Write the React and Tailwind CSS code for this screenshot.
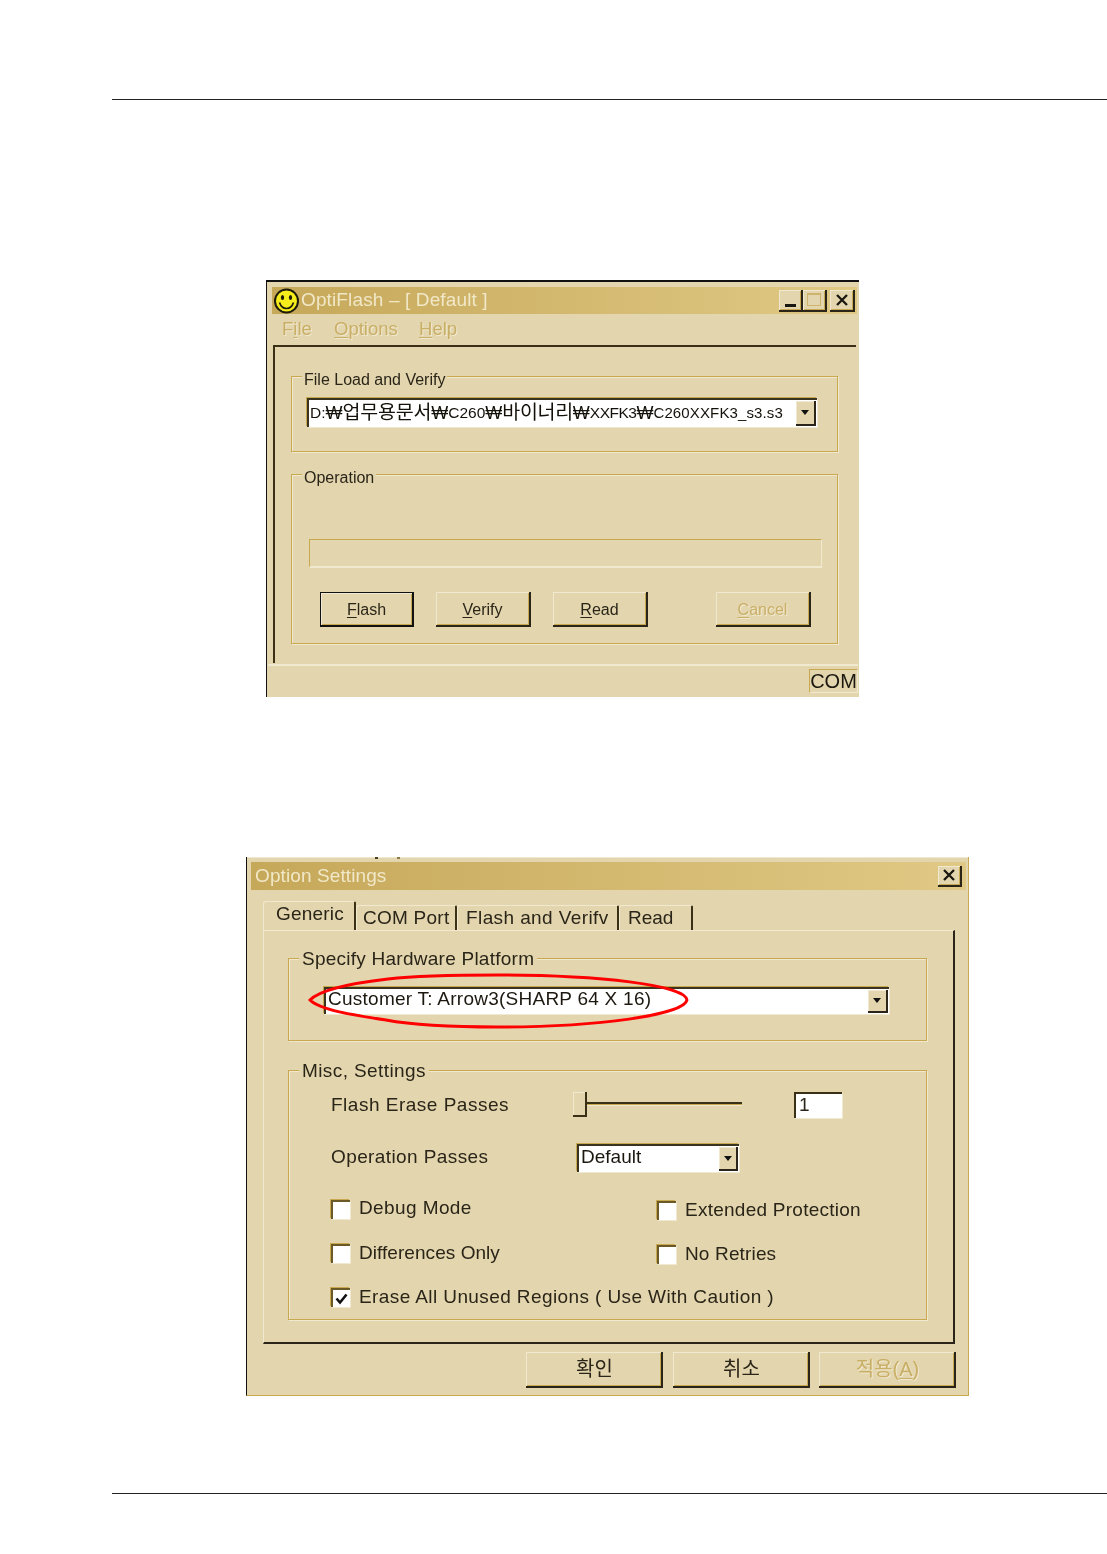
const ui = "font-['Liberation_Sans','Noto_Sans_CJK_KR',sans-serif] text-[#2a2518] blur-[0.35px]";

function Mn({ children }) {
  return <span className="underline underline-offset-2 decoration-1">{children}</span>;
}

function Group({ label, className, labelClass, children }) {
  return (
    <div className={`relative border border-[#c9a94f] shadow-[inset_1px_1px_0_#f1e9cf,1px_1px_0_#f1e9cf] ${className}`}>
      <div className={`absolute bg-[#e3d6ae] whitespace-nowrap ${labelClass}`}>{label}</div>
      {children}
    </div>
  );
}

function Arrow() {
  return (
    <svg width="8" height="5" viewBox="0 0 8 5">
      <path d="M0 0h8L4 5z" fill="#111" />
    </svg>
  );
}

function Combo({ className, btn = 'w-[20px]', children }) {
  return (
    <div className={`flex border-t-2 border-l-2 border-[#3a3320] shadow-[-1px_-1px_0_#c9a94f,1px_1px_0_#f1e9cf] bg-white ${className}`}>
      <div className="flex-1 min-w-0 overflow-hidden whitespace-nowrap flex items-center">{children}</div>
      <div className={`${btn} my-[1px] mr-[1px] flex items-center justify-center bg-[#e3d6ae] border-r-2 border-b-2 border-[#2a2518] shadow-[inset_1px_1px_0_#f1e9cf]`}>
        <Arrow />
      </div>
    </div>
  );
}

function WinBtn({ className, children, dark }) {
  return (
    <div className={`flex items-center justify-center bg-[#e3d6ae] border-r-2 border-b-2 ${dark ? 'border-[#111]' : 'border-[#2a2518]'} shadow-[inset_1px_1px_0_#f1e9cf,inset_-1px_-1px_0_#c9a94f] ${className}`}>
      {children}
    </div>
  );
}

function CloseIcon() {
  return (
    <svg width="14" height="12" viewBox="0 0 14 12">
      <path d="M2 1 12 11M12 1 2 11" stroke="#1a1610" strokeWidth="2.3" fill="none" />
    </svg>
  );
}

function Smiley() {
  return (
    <svg width="27" height="26" viewBox="0 0 27 26" className="shrink-0">
      <circle cx="13.5" cy="13" r="11.5" fill="#f5ec1c" stroke="#1c1a08" strokeWidth="2" />
      <ellipse cx="9.5" cy="9.5" rx="1.6" ry="2.6" fill="#1c1a08" />
      <ellipse cx="17.5" cy="9.5" rx="1.6" ry="2.6" fill="#1c1a08" />
      <path d="M6.5 14.5c1.5 4.5 4.2 6 7 6s5.5-1.5 7-6" stroke="#1c1a08" strokeWidth="1.7" fill="none" />
    </svg>
  );
}

function Check({ checked, className = '' }) {
  return (
    <div className={`w-[19px] h-[19px] shrink-0 bg-white border-t-2 border-l-2 border-[#6b5a28] shadow-[-1px_-1px_0_#c9a94f,1px_1px_0_#f1e9cf] flex items-center justify-center ${className}`}>
      {checked && (
        <svg width="13" height="12" viewBox="0 0 13 12">
          <path d="M1.5 5.5 5 9.5 11.5 1.5" stroke="#111" strokeWidth="2.6" fill="none" />
        </svg>
      )}
    </div>
  );
}

function CheckRow({ label, className, textClass = 'pb-[2px]' }) {
  return (
    <div className={`flex items-center ${className}`}>
      <Check />
      <span className={`ml-[9px] ${textClass}`}>{label}</span>
    </div>
  );
}

function Won() {
  return <span className="text-[18px]">₩</span>;
}

function OptiFlash() {
  return (
    <div className={`ml-[266px] mt-[180px] w-[593px] h-[417px] shrink-0 flex flex-col border-l border-t-2 border-[#111] bg-[#e3d6ae] ${ui}`}>
      <div className="mt-[5px] ml-[5px] mr-[2px] h-[27px] flex items-center bg-gradient-to-r from-[#c6a859] to-[#e0c985]">
        <div className="ml-[1px] mr-[1px]"><Smiley /></div>
        <span className="pb-[2px] text-[19px] tracking-[0.13px] text-[#f1e8c8] leading-none whitespace-nowrap">OptiFlash – [ Default ]</span>
        <div className="ml-auto flex items-center mr-[2px]">
          <WinBtn className="w-[24px] h-[22px] items-end pb-[3px]">
            <div className="w-[11px] h-[3px] bg-[#1a1610]" />
          </WinBtn>
          <WinBtn className="w-[24px] h-[22px]">
            <div className="w-[14px] h-[13px] border border-t-2 border-[#cdb36c]" />
          </WinBtn>
          <WinBtn className="ml-[3px] w-[25px] h-[22px]"><CloseIcon /></WinBtn>
        </div>
      </div>
      <div className="h-[31px] pb-[1px] flex items-center pl-[15px] text-[18.5px] leading-none text-[#c9ae66] [text-shadow:1px_1px_0_#f1e9cf] shrink-0">
        <span className="w-[52px]">F<Mn>i</Mn>le</span>
        <span className="w-[85px]"><Mn>O</Mn>ptions</span>
        <span><Mn>H</Mn>elp</span>
      </div>
      <div className="ml-[6px] mr-[3px] h-[318px] shrink-0 border-t-2 border-l-2 border-[#3a3015] pl-[16px] text-[16px] leading-none">
        <Group label="File Load and Verify" className="mt-[29px] w-[547px] h-[76px]" labelClass="-top-[5px] left-[10px] px-[2px]">
          <Combo className="ml-[15px] mt-[21px] w-[510px] h-[29px]">
            <span className="pl-[1px] pb-[2px] text-[#14110a] text-[15.5px] flex items-center">
              D:<Won /><span className="text-[19.5px] tracking-[-0.2px]">업무용문서</span><Won />C260<Won /><span className="text-[19.5px] tracking-[-0.3px]">바이너리</span><Won /><span className="tracking-[-0.5px]">XXFK3</span><Won /><span className="text-[15px] tracking-[0.13px]">C260XXFK3_s3.s3</span>
            </span>
          </Combo>
        </Group>
        <Group label="Operation" className="mt-[22px] w-[547px] h-[170px]" labelClass="-top-[5px] left-[10px] px-[2px]">
          <div className="ml-[17px] mt-[64px] w-[513px] h-[29px] border border-[#c9a94f] border-r-[#f1e9cf] border-b-[#f1e9cf] border-b-2" />
          <div className="flex mt-[24px] ml-[28px] text-[16px] pb-px">
            <WinBtn dark className="w-[94px] h-[35px] border-t border-l border-t-[#111] border-l-[#111] shadow-[inset_-1px_-1px_0_#c9a94f]"><span className="pt-[1px]"><Mn>F</Mn>lash</span></WinBtn>
            <WinBtn className="ml-[22px] w-[95px] h-[35px]"><span className="pt-[2px]"><Mn>V</Mn>erify</span></WinBtn>
            <WinBtn className="ml-[22px] w-[95px] h-[35px]"><span className="pt-[2px]"><Mn>R</Mn>ead</span></WinBtn>
            <WinBtn className="ml-[68px] w-[95px] h-[35px] text-[#c9ae66] [text-shadow:1px_1px_0_#f1e9cf]"><span className="pt-[2px]"><Mn>C</Mn>ancel</span></WinBtn>
          </div>
        </Group>
      </div>
      <div className="ml-[1px] mr-[1px] mt-[1px] flex-1 border-t-2 border-[#f1e9cf] flex justify-end items-start pt-[3px]">
        <div className="w-[49px] h-[24px] border border-[#c9a94f] border-r-[#f1e9cf] border-b-[#f1e9cf] text-[20px] leading-[22px] text-center text-[#1c1810] overflow-hidden">COM</div>
      </div>
    </div>
  );
}

function Tab({ className, children }) {
  return (
    <div className={`flex items-center bg-[#e3d6ae] border-t border-l border-t-[#f1e9cf] border-l-[#f1e9cf] border-r-2 border-r-[#3a3015] rounded-tl-[3px] rounded-tr-[2px] whitespace-nowrap ${className}`}>
      {children}
    </div>
  );
}

function OptionSettings() {
  return (
    <div className={`relative ml-[246px] mt-[160px] w-[723px] h-[539px] shrink-0 flex flex-col border-l border-[#111] border-r border-r-[#c9a94f] border-b border-b-[#c9a94f] bg-[#e3d6ae] shadow-[inset_0_1px_0_#f1e9cf] text-[19px] tracking-[0.4px] leading-none ${ui}`}>
      <div className="absolute left-[128px] top-0 w-[3px] h-[2px] bg-[#4a3f20]" />
      <div className="absolute left-[150px] top-0 w-[3px] h-[2px] bg-[#8a7a45]" />
      <div className="mt-[5px] ml-[4px] mr-[2px] h-[28px] shrink-0 flex items-center bg-gradient-to-r from-[#c6a859] to-[#e0c985]">
        <span className="ml-[4px] pb-[2px] tracking-[0.1px] text-[#f1e8c8]">Option Settings</span>
        <WinBtn className="ml-auto mr-[4px] w-[24px] h-[21px]"><CloseIcon /></WinBtn>
      </div>
      <div className="ml-[16px] mt-[11px] h-[29px] flex items-end shrink-0">
        <Tab className="w-[93px] h-[29px] pl-[12px] pb-[6px] tracking-[0.2px]">Generic</Tab>
        <Tab className="w-[101px] h-[25px] pl-[6px] pb-[2px] tracking-[0.25px]">COM Port</Tab>
        <Tab className="w-[162px] h-[25px] pl-[8px] pb-[2px]">Flash and Verifv</Tab>
        <Tab className="w-[74px] h-[25px] pl-[8px] pb-[2px] tracking-[0px]">Read</Tab>
      </div>
      <div className="relative ml-[16px] w-[692px] h-[414px] shrink-0 border-t border-l border-[#f1e9cf] border-r-2 border-r-[#2a2518] border-b-2 border-b-[#2a2518]">
        <Group label="Specify Hardware Platform" className="ml-[24px] mt-[27px] w-[639px] h-[83px] tracking-[0.25px]" labelClass="-top-[10px] left-[10px] px-[3px]">
          <Combo className="ml-[35px] mt-[28px] w-[565px] h-[27px]">
            <span className="pl-[2px] pb-[7px] text-[#1c1810] tracking-[0.25px]">Customer T: Arrow3(SHARP 64 X 16)</span>
          </Combo>
        </Group>
        <svg className="absolute left-[44px] top-[42px]" width="382" height="57" viewBox="0 0 382 57">
          <path d="M2 27C12 17 45 10 80 6 115 2 160 2 190 2 290 2 378 12 379 27 376 42 290 54 190 54 150 54 110 53 78 47 45 42 12 37 2 27Z" fill="none" stroke="#f00" strokeWidth="3" />
        </svg>
        <Group label="Misc, Settings" className="ml-[24px] mt-[29px] w-[639px] h-[250px]" labelClass="-top-[10px] left-[10px] px-[3px]">
          <div className="pl-[42px] pt-[21px] flex flex-col">
            <div className="flex items-center h-[26px]">
              <span className="w-[242px] pb-[2px] tracking-[0.5px]">Flash Erase Passes</span>
              <div className="relative w-[169px] h-[26px] flex items-center">
                <div className="w-full h-[3px] ml-[10px] -mt-[4px] bg-[#3a3015] border-b border-[#c9a94f] shadow-[0_1px_0_#f1e9cf]" />
                <div className="absolute left-0 top-0 w-[14px] h-[25px] bg-[#e3d6ae] border-r-2 border-b-2 border-[#3a3015] shadow-[inset_1px_1px_0_#f1e9cf]" />
              </div>
              <div className="ml-[52px] w-[48px] h-[26px] bg-white border-t-2 border-l-2 border-[#3a3015] shadow-[1px_1px_0_#f1e9cf] pl-[3px] pb-[3px] flex items-center">1</div>
            </div>
            <div className="flex items-center h-[28px] mt-[26px]">
              <span className="w-[246px] pb-[4px]">Operation Passes</span>
              <Combo className="w-[162px] h-[28px]" btn="w-[19px]">
                <span className="pl-[2px] pb-[6px] text-[#1c1810] tracking-[0px]">Default</span>
              </Combo>
            </div>
            <div className="flex mt-[26px] h-[23px] items-start">
              <CheckRow label="Debug Mode" className="w-[326px]" textClass="pb-[4px]" />
              <CheckRow label="Extended Protection" className="mt-[2px] tracking-[0.25px]" />
            </div>
            <div className="flex mt-[22px] h-[23px] items-start">
              <CheckRow label="Differences Only" className="w-[326px] tracking-[0.05px]" />
              <CheckRow label="No Retries" className="mt-[1px] tracking-[0.15px]" />
            </div>
            <div className="flex items-center mt-[20px] h-[23px]">
              <Check checked />
              <span className="ml-[9px] pb-[2px]">Erase All Unused Regions ( Use With Caution )</span>
            </div>
          </div>
        </Group>
      </div>
      <div className="flex mt-[8px] ml-[279px] text-[20px] leading-none tracking-normal">
        <WinBtn className="w-[137px] h-[36px] pl-[2px]">확인</WinBtn>
        <WinBtn className="ml-[10px] w-[137px] h-[36px] pl-[2px]">취소</WinBtn>
        <WinBtn className="ml-[9px] w-[137px] h-[36px] pl-[2px] text-[#c9ae66] [text-shadow:1px_1px_0_#f1e9cf]"><span>적용(<Mn>A</Mn>)</span></WinBtn>
      </div>
    </div>
  );
}

export default function App() {
  return (
    <div className="w-[1107px] h-[1554px] bg-white flex flex-col overflow-hidden">
      <div className="ml-[112px] mt-[99px] h-px bg-[#222] shrink-0" />
      <OptiFlash />
      <OptionSettings />
      <div className="ml-[112px] mt-[97px] h-px bg-[#222] shrink-0" />
    </div>
  );
}
